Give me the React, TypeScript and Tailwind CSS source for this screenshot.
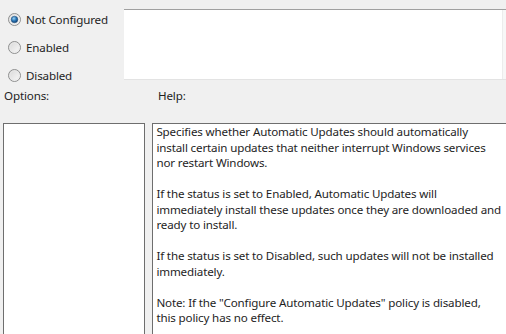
import React from "react";

function Radio({ checked }: { checked?: boolean }) {
  return (
    <svg width="13" height="13" viewBox="0 0 13 13" className="shrink-0">
      <defs>
        <linearGradient id={checked ? "rgc" : "rgu"} x1="0" y1="0" x2="1" y2="1">
          <stop offset="0" stopColor="#d6d6d6" />
          <stop offset="1" stopColor="#fbfbfb" />
        </linearGradient>
        <radialGradient id="dot" cx="0.4" cy="0.35" r="0.7">
          <stop offset="0" stopColor="#9fd3f3" />
          <stop offset="0.5" stopColor="#2a78b8" />
          <stop offset="1" stopColor="#0d3c6e" />
        </radialGradient>
      </defs>
      <circle cx="6.5" cy="6.5" r="6" fill={`url(#${checked ? "rgc" : "rgu"})`} stroke="#8e8f8f" strokeWidth="1" />
      <circle cx="6.5" cy="6.5" r="4.6" fill="none" stroke="#e8e8e8" strokeWidth="0.8" />
      {checked && <circle cx="6.5" cy="6.5" r="3.3" fill="url(#dot)" stroke="#1c4a78" strokeWidth="0.5" />}
    </svg>
  );
}

export default function App() {
  const font = { fontFamily: '"Noto Sans", "Open Sans", sans-serif' };
  return (
    <div className="w-[506px] h-[334px] overflow-hidden bg-[#f0f0f0] text-[11.6px] tracking-[-0.15px] text-[#1e1e1e]" style={font}>
      <div className="flex h-[86px]">
        <div className="w-[124px] shrink-0 flex flex-col pl-[8px] pt-[12px] gap-[13px]">
          <label className="flex items-center gap-[5px] h-[15px]">
            <Radio checked />
            <span>Not Configured</span>
          </label>
          <label className="flex items-center gap-[5px] h-[15px]">
            <Radio />
            <span>Enabled</span>
          </label>
          <label className="flex items-center gap-[5px] h-[15px]">
            <Radio />
            <span>Disabled</span>
          </label>
        </div>
        <div className="mt-[9px] h-[71px] flex-1 bg-white border-t border-t-[#a0a0a0] border-b border-b-[#e3e3e3] flex justify-end">
          <div className="w-[4px] border-l border-[#ececec] bg-[#f7f7f7]" />
        </div>
      </div>
      <div className="flex h-[20px] items-center">
        <div className="w-[154px] pl-[4px]">Options:</div>
        <div className="pl-[4px]">Help:</div>
      </div>
      <div className="flex mt-[17px] h-[230px]">
        <div className="ml-[3px] w-[145px] bg-white border border-[#6e6e6e]" />
        <div className="ml-[7px] w-[360px] bg-white border-l border-t border-[#6e6e6e] pl-[3px] pr-[5px] pt-[0px] leading-[15.5px]">
          <p>Specifies whether Automatic Updates should automatically install certain updates that neither interrupt Windows services nor restart Windows.</p>
          <p className="mt-[15.5px]">If the status is set to Enabled, Automatic Updates will immediately install these updates once they are downloaded and ready to install.</p>
          <p className="mt-[15.5px]">If the status is set to Disabled, such updates will not be installed immediately.</p>
          <p className="mt-[15.5px]">Note: If the "Configure Automatic Updates" policy is disabled, this policy has no effect.</p>
        </div>
      </div>
    </div>
  );
}
